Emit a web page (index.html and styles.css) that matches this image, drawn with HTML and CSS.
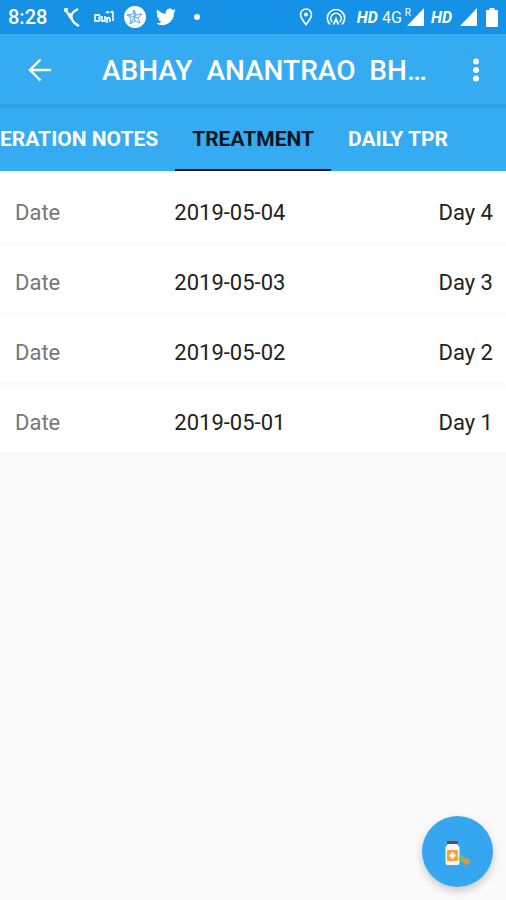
FILE: index.html
```html
<!DOCTYPE html>
<html lang="en">
<head>
<meta charset="utf-8">
<meta name="viewport" content="width=device-width, initial-scale=1">
<title>Treatment</title>
<link rel="stylesheet" href="styles.css">
</head>
<body>
<div class="status">
  <span class="clock">8:28</span>
  <svg class="runner" width="18" height="22" viewBox="0 0 18 22"><circle cx="3" cy="4" r="2.200" fill="#fff"/><path d="M15 3C11 5 8 8 8 11c1 4 4 7 8 9" fill="none" stroke="#fff" stroke-width="2.400"/><path d="M2 5l7 3 1 6-3-1z" fill="#fff"/></svg>
  <svg class="script" width="20" height="16" viewBox="0 0 20 16" fill="none" stroke="#e4f3ff" stroke-width="1.800"><path d="M1 6h4q2 2 0 3 2 2 0 3H1zM8 7v5h3V7M13 8v6M13 11q2-5 3 0v2M17 4q1-3 2 0v8M12 4q2-2 3 0"/></svg>
  <svg class="disc" width="22" height="22" viewBox="0 0 22 22"><circle cx="11" cy="11" r="11" fill="#fff"/><g fill="none" stroke="#5aaeea" stroke-width="1"><path d="M10 4l2 5 6-1-4 4 2 5-5-2-5 3 1-6-4-3 6-1zM10 4l1 11M3 9l11 3M6 18l6-9"/></g></svg>
  <svg class="bird" width="20" height="18" viewBox="0 0 24 20"><path fill="#fff" d="M24 2.4a9.800 9.800 0 0 1-2.800.8A4.900 4.900 0 0 0 23.300.4a9.900 9.900 0 0 1-3.100 1.200 4.900 4.900 0 0 0-8.400 4.500A14 14 0 0 1 1.700 1a4.900 4.900 0 0 0 1.500 6.600A4.900 4.900 0 0 1 1 7a4.900 4.900 0 0 0 3.900 4.900 5 5 0 0 1-2.200.1 4.900 4.900 0 0 0 4.600 3.400A9.900 9.900 0 0 1 0 17.500 14 14 0 0 0 21.500 5z"/></svg>
  <span class="dot"></span>
  <div class="signals">
    <svg class="pin" width="14" height="18" viewBox="0 0 14 18"><path d="M7 1a5.500 5.500 0 0 0-5.500 5.500C1.500 10 7 16.500 7 16.500S12.500 10 12.500 6.500A5.500 5.500 0 0 0 7 1z" fill="none" stroke="#fff" stroke-width="1.600"/><circle cx="7" cy="6.500" r="2" fill="#fff"/></svg>
    <svg class="hotspot" width="20" height="18" viewBox="0 0 20 18" fill="none" stroke="#fff" stroke-width="1.600"><path d="M4 16.500a8.700 8.700 0 1 1 12 0M6.200 14a5.200 5.200 0 1 1 7.600 0"/><path d="M10 8.500l3.500 8h-2l-1.500-3-1.500 3h-2z" fill="#fff" stroke="none"/></svg>
    <span class="hd">HD</span>
    <span class="net">4G</span>
    <span class="roam">R</span>
    <svg class="bars" width="17" height="18" viewBox="0 0 17 18"><path d="M17 0v18H0z" fill="#fff"/></svg>
    <span class="hd second">HD</span>
    <svg class="bars last" width="17" height="18" viewBox="0 0 17 18"><path d="M17 0v18H0z" fill="#fff"/></svg>
    <svg width="12" height="19" viewBox="0 0 12 19"><path d="M3.500 0h5v2H11a1 1 0 0 1 1 1v15a1 1 0 0 1-1 1H1a1 1 0 0 1-1-1V3a1 1 0 0 1 1-1h2.500z" fill="#fff"/></svg>
  </div>
</div>
<header class="appbar">
  <button class="icon" aria-label="Back"><svg width="24" height="24" viewBox="0 0 24 24" fill="none" stroke="#fff" stroke-width="2.400"><path d="M23 12H2M12.500 1.500L2 12l10.500 10.500"/></svg></button>
  <h1>ABHAY&nbsp; ANANTRAO&nbsp; BH…</h1>
  <button class="icon more" aria-label="More options"><svg width="8" height="24" viewBox="0 0 8 24" fill="#fff"><circle cx="4" cy="3.500" r="3"/><circle cx="4" cy="12" r="3"/><circle cx="4" cy="20.500" r="3"/></svg></button>
</header>
<nav class="tabs">
  <a href="#notes" class="first">ERATION NOTES</a>
  <a href="#treatment" class="active" aria-current="page">TREATMENT</a>
  <a href="#tpr">DAILY TPR</a>
</nav>
<main>
  <ul class="list">
    <li><span class="label">Date</span><span>2019-05-04</span><span class="day">Day 4</span></li>
    <li><span class="label">Date</span><span>2019-05-03</span><span class="day">Day 3</span></li>
    <li><span class="label">Date</span><span>2019-05-02</span><span class="day">Day 2</span></li>
    <li><span class="label">Date</span><span>2019-05-01</span><span class="day">Day 1</span></li>
  </ul>
</main>
<button class="fab" aria-label="Add treatment">
  <svg width="28" height="28" viewBox="0 0 28 28"><rect x="3" y="1" width="11" height="5" rx="1" fill="#2c5c80"/><path d="M3 2h11" stroke="#a9d4ef" stroke-width="1"/><path d="M4 6h9l2.500 3v16a2 2 0 0 1-2 2h-10a2 2 0 0 1-2-2V9z" fill="#f7f4f2"/><rect x="3" y="12" width="11" height="11" rx="1" fill="#f9a13a"/><path d="M8.500 14.500v6M5.500 17.500h6" stroke="#fff" stroke-width="2.600"/><path d="M16 19l5 4" stroke="#74bd69" stroke-width="5"/><circle cx="22.500" cy="23.500" r="3.200" fill="#e8913a"/></svg>
</button>
</body>
</html>
```
FILE: styles.css
```css
* { box-sizing: border-box; }
body {
  margin: 0;
  min-height: 100vh;
  overflow-x: hidden;
  background: #fafafa;
  color: #222;
  font-family: Roboto, "Noto Sans", sans-serif;
  font-size: 22px;
}
button { border: 0; padding: 0; background: none; }
svg { display: block; flex: none; }
.status {
  display: flex;
  align-items: center;
  height: 34px;
  padding: 0 8px;
  background: #1592e5;
  color: #fff;
}
.clock { font-size: 20px; font-weight: 500; line-height: 24px; }
.runner { margin-left: 16px; }
.script { margin-left: 13px; }
.disc { margin-left: 10px; }
.bird { margin-left: 10px; }
.dot { width: 6px; height: 6px; margin-left: 18px; border-radius: 50%; background: #fff; }
.signals { display: flex; align-items: center; margin-left: auto; }
.hotspot { margin-left: 13px; }
.hd { margin-left: 11px; font-size: 16px; font-weight: 700; font-style: italic; }
.net { margin-left: 4px; font-size: 16px; }
.roam { align-self: flex-start; margin-left: 3px; font-size: 10px; line-height: 10px; }
.bars { margin-left: -4px; }
.hd.second { margin-left: 7px; }
.bars.last { margin: 0 9px 0 8px; }
.appbar {
  display: flex;
  align-items: center;
  height: 74px;
  padding: 2px 16px 0 28px;
  background: #35abf1;
  border-bottom: 4px solid #329fe5;
}
.icon { display: grid; place-items: center; width: 24px; height: 48px; flex: none; }
.appbar h1 {
  flex: 1;
  min-width: 0;
  margin: 2px 24px 0 50px;
  overflow: hidden;
  text-overflow: ellipsis;
  white-space: nowrap;
  color: #fff;
  font-size: 28px;
  font-weight: 500;
  line-height: 36px;
}
.more { width: 28px; }
.tabs {
  display: flex;
  height: 63px;
  background: #35abf1;
}
.tabs a {
  flex: none;
  padding: 0 17px;
  color: #fff;
  font-size: 21px;
  font-weight: 700;
  line-height: 62px;
  text-decoration: none;
}
.tabs .first { padding-left: 0; }
.tabs .active { color: #0b1720; border-bottom: 2px solid #101a20; }
.list { margin: 0; padding: 4px 0 0; list-style: none; background: #fff; }
.list li {
  display: grid;
  grid-template-columns: 1fr 1fr 1fr;
  align-items: center;
  padding: 23px 13px 14px 15px;
  line-height: 30px;
  background: #fff;
}
.list li + li { border-top: 3px solid #fafafa; border-radius: 3px; }
.label { color: #777; }
.day { text-align: right; }
.fab {
  position: fixed;
  right: 13px;
  bottom: 13px;
  display: grid;
  place-items: center;
  width: 71px;
  height: 71px;
  border-radius: 50%;
  background: #35a7f0;
  box-shadow: 0 4px 8px #0003;
}
```
